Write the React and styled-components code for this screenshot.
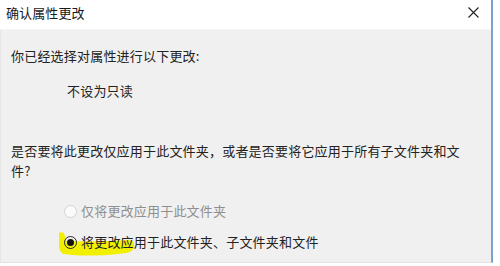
import React from 'react'
import styled, { createGlobalStyle } from 'styled-components'

const GlobalStyle = createGlobalStyle`
  html, body {
    margin: 0;
    padding: 0;
    background: #fff;
  }
  body {
    font-family: "Noto Sans CJK SC", "Liberation Sans", sans-serif;
  }
`

const Window = styled.div`
  width: 493px;
  height: 263px;
  display: flex;
  flex-direction: column;
  border-right: 2px solid #7ba2cc;
  border-bottom: 1px solid #e2e2e2;
  box-sizing: border-box;
  background: #f0f0f0;
`
const TitleBar = styled.div`
  height: 30px;
  flex: none;
  display: flex;
  align-items: center;
  padding: 0 8px 4px 6px;
  box-sizing: border-box;
  background: #fff;
  border-bottom: 1px solid #f4f4f4;
`
const Title = styled.div`
  flex: 1;
  font-size: 13px;
  letter-spacing: 0.1px;
  color: #1a1a1a;
`
const CloseButton = styled.div`
  width: 12px;
  height: 12px;
  margin-right: 4px;
  display: flex;
  align-items: center;
  justify-content: center;
`
const Body = styled.div`
  flex: 1;
  padding-left: 10px;
  display: flex;
  flex-direction: column;
  font-size: 13px;
  letter-spacing: 0.2px;
  line-height: 20px;
  color: #222;
  border-left: 1px solid #e6e6e6;
`
const Line = styled.div`
  margin-top: ${props => props.top}px;
  padding-left: ${props => props.indent || 0}px;
  max-width: ${props => props.wrap || 470}px;
`
const Options = styled.div`
  padding-left: 53px;
  display: flex;
  flex-direction: column;
  gap: 11px;
  margin-top: 20px;
`
const OptionRow = styled.label`
  position: relative;
  display: flex;
  align-items: center;
  gap: 4px;
  height: 20px;
  color: ${props => (props.disabled ? '#8f8f8f' : '#222')};
`
const Radio = styled.span`
  position: relative;
  z-index: 1;
  width: 13px;
  height: 13px;
  border-radius: 50%;
  box-sizing: border-box;
  border: 1px solid ${props => (props.disabled ? '#d4d4d4' : '#2a2a2a')};
  background: ${props => (props.disabled ? '#fbfbfb' : 'transparent')};
  display: flex;
  align-items: center;
  justify-content: center;
  &::after {
    content: '';
    display: ${props => (props.checked ? 'block' : 'none')};
    width: 7px;
    height: 7px;
    border-radius: 50%;
    background: #111;
  }
`
const OptionText = styled.span`
  position: relative;
  z-index: 1;
`
const Highlight = styled.svg`
  position: absolute;
  left: -6px;
  top: -3px;
  z-index: 0;
  pointer-events: none;
`

const App = () => (
  <>
    <GlobalStyle />
    <Window>
      <TitleBar>
        <Title>确认属性更改</Title>
        <CloseButton>
          <svg width="11" height="11" viewBox="0 0 11 11">
            <path d="M0.5 0.5 L10.5 10.5 M10.5 0.5 L0.5 10.5" stroke="#222" strokeWidth="1.1" />
          </svg>
        </CloseButton>
      </TitleBar>
      <Body>
        <Line top={16}>你已经选择对属性进行以下更改:</Line>
        <Line top={15} indent={56}>不设为只读</Line>
        <Line top={40} wrap={456}>
          是否要将此更改仅应用于此文件夹，或者是否要将它应用于所有子文件夹和文件?
        </Line>
        <Options>
          <OptionRow disabled>
            <Radio disabled />
            <OptionText>仅将更改应用于此文件夹</OptionText>
          </OptionRow>
          <OptionRow>
            <Highlight width="80" height="30" viewBox="0 0 80 30">
              <path
                d="M1 4 C2 3 4 3 6 4 L8 12 C30 13 55 12 70 11 C74 11 77 13 76 18 C75 23 70 24 60 25 C40 27 20 27 6 25 C2 24 1 20 1 14 Z"
                fill="#f2f000"
              />
            </Highlight>
            <Radio checked />
            <OptionText>将更改应用于此文件夹、子文件夹和文件</OptionText>
          </OptionRow>
        </Options>
      </Body>
    </Window>
  </>
)

export default App
